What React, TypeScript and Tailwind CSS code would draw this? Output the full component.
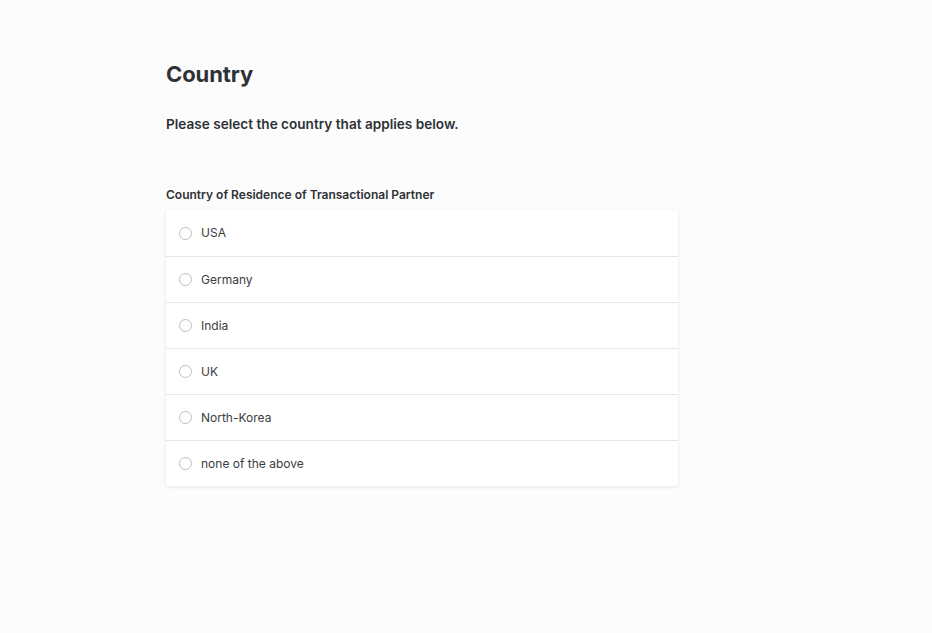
const options = ['USA', 'Germany', 'India', 'UK', 'North-Korea', 'none of the above']

export default function App() {
  return (
    <div
      className="min-h-[633px] w-full bg-[#fcfcfc] text-[#2e3236]"
      style={{ fontFamily: 'Inter, "Noto Sans", sans-serif' }}
    >
      <div className="pl-[166px] pt-[60px] w-[678px]">
        <h1 className="text-[22px] leading-[28px] font-bold tracking-[-0.1px]">Country</h1>
        <p className="mt-[27px] text-[13.6px] leading-[18px] font-semibold">
          Please select the country that applies below.
        </p>

        <div className="mt-[54px]">
          <div className="text-[12px] leading-[16px] font-semibold">
            Country of Residence of Transactional Partner
          </div>
          <div className="mt-[7px] bg-white rounded-[2px] shadow-[0_1px_4px_rgba(0,0,0,0.08)]">
            {options.map((opt, i) => (
              <label
                key={opt}
                className={`flex items-center h-[46px] px-[13px] cursor-pointer ${
                  i > 0 ? 'border-t border-[#e6e6e6]' : ''
                }`}
              >
                <span className="w-[13px] h-[13px] rounded-full border border-[#bdbdbd] bg-white" />
                <span className="ml-[9px] text-[12px] text-[#3a3d41]">{opt}</span>
              </label>
            ))}
          </div>
        </div>
      </div>
    </div>
  )
}
